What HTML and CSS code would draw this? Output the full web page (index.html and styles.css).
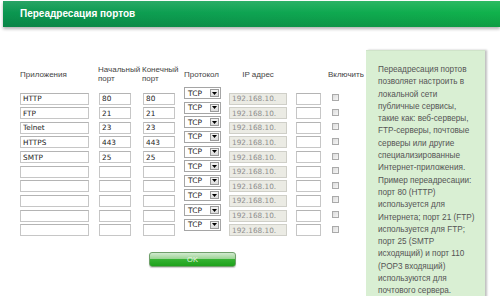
FILE: index.html
```html
<!DOCTYPE html>
<html lang="ru">

<head>
    <meta charset="UTF-8">
    <title>Переадресация портов</title>
    <link rel="stylesheet" href="styles.css">
</head>

<body>
    <div class="title-bar">Переадресация портов</div>

    <div class="main">
        <div class="form">
            <div class="grid" id="grid">
                <div class="head">Приложения</div>
                <div class="head two">Начальный<br>порт</div>
                <div class="head two">Конечный<br>порт</div>
                <div class="head">Протокол</div>
                <div class="head center">IP адрес</div>
                <div class="head"></div>
                <div class="head enable">Включить</div>
            </div>
            <div class="ok-button">OK</div>
        </div>

        <div class="help">
            Переадресация портов позволяет настроить в локальной сети публичные сервисы,
            такие как: веб-серверы, FTP-серверы, почтовые серверы или другие
            специализированные Интернет-приложения. Пример переадресации: порт 80 (HTTP)
            используется для Интернета; порт 21 (FTP) используется для FTP; порт 25 (SMTP
            исходящий) и порт 110 (POP3 входящий) используются для почтового сервера.
        </div>
    </div>

    <script>
        const rows = [
            ['HTTP', '80', '80'],
            ['FTP', '21', '21'],
            ['Telnet', '23', '23'],
            ['HTTPS', '443', '443'],
            ['SMTP', '25', '25'],
            ['', '', ''],
            ['', '', ''],
            ['', '', ''],
            ['', '', ''],
            ['', '', '']
        ];
        const grid = document.getElementById('grid');
        for (const row of rows) {
            grid.insertAdjacentHTML('beforeend',
                '<div><input class="field app" value="' + row[0] + '"></div>' +
                '<div><input class="field port" value="' + row[1] + '"></div>' +
                '<div><input class="field port" value="' + row[2] + '"></div>' +
                '<div><div class="select"><span>TCP</span><span class="arrow">' +
                '<svg width="5" height="3" viewBox="0 0 5 3"><path d="M0 0H5L2.5 3Z" fill="#000"/></svg>' +
                '</span></div></div>' +
                '<div><input class="field ip" value="192.168.10." disabled></div>' +
                '<div><input class="field last"></div>' +
                '<div><input type="checkbox" class="check"></div>');
        }
    </script>
</body>

</html>
```

FILE: styles.css
```css
html,
body {
    margin: 0;
    background: #fff;
}

body {
    font-family: "Liberation Sans", Arial, sans-serif;
    color: #444;
}

.title-bar {
    height: 26px;
    margin: 1px 0 0 3px;
    padding-left: 17px;
    line-height: 26px;
    font-size: 10px;
    font-weight: bold;
    color: #fff;
    background:
        linear-gradient(180deg, rgba(255, 255, 255, 0.12) 0%, rgba(255, 255, 255, 0) 45%, rgba(0, 0, 0, 0.12) 100%),
        linear-gradient(90deg, #0b9650, #0ea452 50%, #10b24c);
    box-shadow: 0 2px 3px rgba(0, 0, 0, 0.3);
}

.main {
    display: flex;
    align-items: flex-start;
    margin-top: 23px;
}

.form {
    width: 346px;
    padding: 14px 0 0 20px;
}

.grid {
    display: grid;
    grid-template-columns: 79px 44px 41px 45px 67px 36px 30px;
    grid-template-rows: 23px;
    grid-auto-rows: 14.65px;
    align-items: start;
}

.head {
    height: 20px;
    display: flex;
    align-items: center;
    font-size: 8px;
    color: #444;
}

.head.two {
    line-height: 9.5px;
    margin-left: -1px;
}

.head.center {
    justify-content: center;
    width: 58px;
}

.head.enable {
    margin-left: -4px;
    white-space: nowrap;
}

.field {
    box-sizing: border-box;
    height: 12px;
    margin: 0;
    padding: 0 0 0 2px;
    border: 1px solid #c6c6c6;
    border-top-color: #b4b4b4;
    font-family: "DejaVu Sans", Verdana, sans-serif;
    font-size: 7.3px;
    color: #222;
    background: #fff;
    outline: none;
}

.app {
    width: 69px;
}

.port {
    width: 32px;
}

.ip {
    width: 58px;
    background: #ebebe4;
    color: #8e8e8e;
    border-color: #cfcfc8;
}

.last {
    width: 25px;
}

.select {
    box-sizing: border-box;
    width: 37px;
    height: 12px;
    display: flex;
    align-items: center;
    justify-content: space-between;
    padding: 0 1px 0 3px;
    border: 1px solid #a5a5a5;
    background: #fff;
    font-family: "DejaVu Sans", Verdana, sans-serif;
    font-size: 7.5px;
    color: #222;
}

.arrow {
    box-sizing: border-box;
    width: 9px;
    height: 8px;
    display: flex;
    align-items: center;
    justify-content: center;
    border: 1px solid #9a9a9a;
    background: linear-gradient(#f4f4f4, #dcdcdc);
}

.check {
    appearance: none;
    box-sizing: border-box;
    width: 7px;
    height: 7px;
    margin: 2px 0 0 0;
    border: 1px solid #aaa;
    background: linear-gradient(135deg, #dcdcdc, #f6f6f6);
}

.ok-button {
    width: 87px;
    height: 15px;
    box-sizing: border-box;
    margin: 19px 0 0 129px;
    border: 1px solid #6fa06a;
    border-radius: 3px;
    text-align: center;
    line-height: 13px;
    font-size: 7.5px;
    color: #e6f4e2;
    background: linear-gradient(180deg, #d2ead0 0%, #9bd494 45%, #35b232 50%, #1ea21c 100%);
    box-shadow: 0 1px 1px rgba(0, 0, 0, 0.2);
}

.help {
    width: 119px;
    min-height: 250px;
    box-sizing: border-box;
    padding: 13px 10px 0 12px;
    background: #d9efd3;
    border-top: 1px solid #cfe3c9;
    box-shadow: 2px 0 2px rgba(0, 0, 0, 0.25);
    font-size: 8.2px;
    line-height: 12.3px;
    color: #555;
}
```
